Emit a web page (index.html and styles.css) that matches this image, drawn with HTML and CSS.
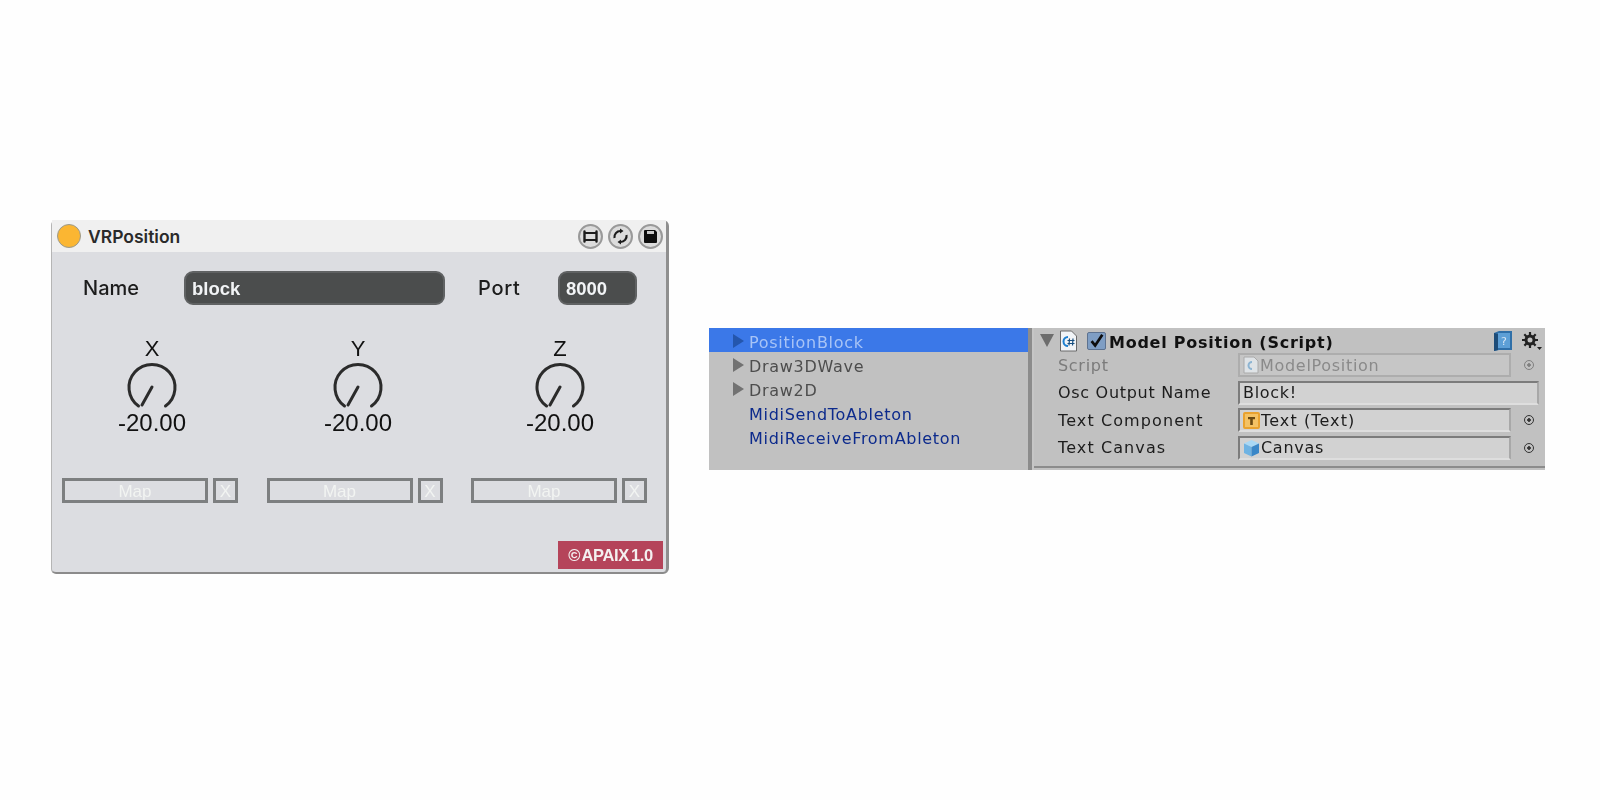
FILE: index.html
```html
<!DOCTYPE html>
<html lang="en">
<head>
  <meta charset="UTF-8">
  <title>VRPosition</title>
  <link rel="stylesheet" href="styles.css">
</head>
<body>
  <div class="page">
    <div class="device">
      <div class="title-bar">
        <span class="dot"></span>
        <span class="device-name">VRPosition</span>
        <div class="title-btns">
          <span class="round-btn">
            <svg width="17" height="17" viewBox="0 0 17 17"><path d="M2.500 3.500v10M14.500 3.500v10" fill="none" stroke="#1c1c1c" stroke-width="2.400" stroke-linecap="round"/><path d="M2.500 5h12M2.500 12h12" fill="none" stroke="#1c1c1c" stroke-width="1.800"/></svg>
          </span>
          <span class="round-btn">
            <svg width="17" height="17" viewBox="0 0 17 17"><path d="M2.500 10a6 6 0 0 1 6-7M14.500 7a6 6 0 0 1-6 7" fill="none" stroke="#1c1c1c" stroke-width="2.200"/><path d="M8 .5l3.500 2.500-3.500 2.500zM9 11.500l-3.500 2.500 3.500 2.500z" fill="#1c1c1c"/></svg>
          </span>
          <span class="round-btn">
            <svg width="17" height="17" viewBox="0 0 17 17"><path d="M2 3a1 1 0 0 1 1-1h10l2 2v10a1 1 0 0 1-1 1H3a1 1 0 0 1-1-1z" fill="#0e0e0e"/><path d="M5 3h7v3H5z" fill="#c9c9c9"/></svg>
          </span>
        </div>
      </div>

      <div class="name-row">
        <span class="name-label">Name</span>
        <span class="field name-field">block</span>
        <span class="port-label">Port</span>
        <span class="field port-field">8000</span>
      </div>

      <div class="knobs">
        <div class="knob">
          <span class="knob-label">X</span>
          <svg class="dial" width="52" height="50" viewBox="0 0 52 50"><path d="M12.500 44a23 23 0 1 1 27 0M16 43l10-18" fill="none" stroke="#2b2b2b" stroke-width="3" stroke-linecap="round"/></svg>
          <span class="knob-value">-20.00</span>
        </div>
        <div class="knob">
          <span class="knob-label">Y</span>
          <svg class="dial" width="52" height="50" viewBox="0 0 52 50"><path d="M12.500 44a23 23 0 1 1 27 0M16 43l10-18" fill="none" stroke="#2b2b2b" stroke-width="3" stroke-linecap="round"/></svg>
          <span class="knob-value">-20.00</span>
        </div>
        <div class="knob">
          <span class="knob-label">Z</span>
          <svg class="dial" width="52" height="50" viewBox="0 0 52 50"><path d="M12.500 44a23 23 0 1 1 27 0M16 43l10-18" fill="none" stroke="#2b2b2b" stroke-width="3" stroke-linecap="round"/></svg>
          <span class="knob-value">-20.00</span>
        </div>
      </div>

      <div class="map-row">
        <div class="map-group"><span class="map-btn">Map</span><span class="map-x">X</span></div>
        <div class="map-group"><span class="map-btn">Map</span><span class="map-x">X</span></div>
        <div class="map-group"><span class="map-btn">Map</span><span class="map-x">X</span></div>
      </div>

      <div class="badge">© APAIX 1.0</div>
    </div>

    <div class="editor">
      <ul class="tree">
        <li class="tree-row selected"><span class="arrow"></span>PositionBlock</li>
        <li class="tree-row"><span class="arrow"></span>Draw3DWave</li>
        <li class="tree-row"><span class="arrow"></span>Draw2D</li>
        <li class="tree-row prefab"><span class="no-arrow"></span>MidiSendToAbleton</li>
        <li class="tree-row prefab"><span class="no-arrow"></span>MidiReceiveFromAbleton</li>
      </ul>

      <div class="splitter"></div>

      <div class="inspector">
        <div class="comp-head">
          <span class="fold"></span>
          <svg class="cs-icon" width="19" height="22" viewBox="0 0 19 22"><path d="M1.500 1h11l5 5v15h-16z" fill="#f1f4f7" stroke="#6a6a6a"/><path d="M9 7a4.500 4.500 0 1 0 0 9" fill="none" stroke="#1d7fd0" stroke-width="2"/><path d="M10.500 8.500l-.5 7M14 8.500l-.5 7M8.500 10.500h7M8.500 13.500h7" stroke="#174f80" stroke-width="1.200"/></svg>
          <span class="check">
            <svg width="19" height="18" viewBox="0 0 19 18"><path d="M4 8l4 5 8-12" fill="none" stroke="#0d0d0d" stroke-width="3"/></svg>
          </span>
          <span class="comp-title">Model Position (Script)</span>
          <svg class="help-icon" width="20" height="22" viewBox="0 0 20 22"><path d="M1 3l5-2h13v19H6l-5 1z" fill="#2f6fa8"/><path d="M5 3h12v15H5z" fill="#5d9fd6"/><path d="M1 3l4 1v16l-4 1z" fill="#1d4c78"/><text x="8" y="15" class="help-mark">?</text></svg>
          <svg class="gear-icon" width="21" height="20" viewBox="0 0 21 20"><g fill="none" stroke="#222"><circle cx="9" cy="9" r="4" stroke-width="3"/><path d="M9 1v16M1 9h16M3.300 3.300l11.400 11.400M14.700 3.300L3.300 14.700" stroke-width="2.200" stroke-dasharray="3 10 3"/></g><path d="M16 16h5l-2.500 3z" fill="#222"/></svg>
        </div>

        <div class="prop disabled">
          <span class="prop-label">Script</span>
          <span class="prop-field"><svg class="small-icon" width="16" height="18" viewBox="0 0 16 18"><path d="M1 1h10l4 4v12H1z" fill="#dfe3e6" stroke="#aaa"/><path d="M9 6a3.500 3.500 0 1 0 0 7" fill="none" stroke="#8db4d2" stroke-width="2"/></svg>ModelPosition</span>
          <span class="target"></span>
        </div>
        <div class="prop">
          <span class="prop-label">Osc Output Name</span>
          <span class="prop-field wide">Block!</span>
        </div>
        <div class="prop">
          <span class="prop-label loose">Text Component</span>
          <span class="prop-field loose"><svg class="small-icon" width="17" height="17" viewBox="0 0 17 17"><rect x="1" y="1" width="15" height="15" rx="1" fill="#f4c264" stroke="#e9a22f" stroke-width="2"/><path d="M5 5h7v2.200H9.800V13H7.200V7.200H5z" fill="#6b4a12"/></svg>Text (Text)</span>
          <span class="target"></span>
        </div>
        <div class="prop">
          <span class="prop-label loose">Text Canvas</span>
          <span class="prop-field"><svg class="small-icon" width="17" height="18" viewBox="0 0 17 18"><path d="M8.500 1l7.500 3.500-7.500 3.500L1 4.500z" fill="#a9d8f5"/><path d="M1 4.500L8.500 8v9.500L1 14z" fill="#6fb3e3"/><path d="M16 4.500L8.500 8v9.500L16 14z" fill="#3a87c8"/></svg>Canvas</span>
          <span class="target"></span>
        </div>
      </div>
    </div>
  </div>
</body>
</html>
```

FILE: styles.css
```css
*{
  margin: 0;
  padding: 0;
  box-sizing: border-box;
}
body{
  background: #fefefe;
  font-family: "Liberation Sans", sans-serif;
}
.page{
  display: flex;
  align-items: flex-start;
  padding: 220px 0 0 51px;
}

/* max device */
.device{
  width: 618px;
  height: 354px;
  background: #dcdde1;
  border-right: 3px solid #8f8f8f;
  border-bottom: 2px solid #8b8b8b;
  border-left: 1px solid #b5b5b5;
  border-radius: 5px 6px 6px 5px;
  display: flex;
  flex-direction: column;
  filter: blur(0.5px);
}
.title-bar{
  height: 32px;
  flex: none;
  display: flex;
  align-items: center;
  padding: 0 3px 0 5px;
  background: #f0f0f0;
}
.dot{
  width: 24px;
  height: 24px;
  border-radius: 50%;
  background: #fbb632;
  border: 1px solid #9a9a8e;
}
.device-name{
  margin-left: 7px;
  font-family: Inter, sans-serif;
  font-size: 17.500px;
  font-weight: 600;
  color: #2a2a2a;
}
.title-btns{
  margin-left: auto;
  display: flex;
  gap: 5px;
}
.round-btn{
  width: 25px;
  height: 25px;
  border-radius: 50%;
  border: 2px solid #999;
  background: #dcdcdc;
  display: flex;
  align-items: center;
  justify-content: center;
}
.name-row{
  margin-top: 19px;
  height: 34px;
  flex: none;
  display: flex;
  align-items: center;
  padding-left: 31px;
  font-family: Inter, sans-serif;
  font-size: 20px;
  font-weight: 500;
  color: #1c1c1c;
}
.name-label{
  width: 101px;
}
.port-label{
  width: 80px;
  margin-left: 33px;
  letter-spacing: 0.7px;
}
.field{
  height: 34px;
  line-height: 31px;
  padding-left: 6px;
  border-radius: 9px;
  background: #4b4d4d;
  border: 2px solid #606263;
  color: #f2f4f6;
  font-family: "Liberation Sans", sans-serif;
  font-size: 18.500px;
  font-weight: bold;
  letter-spacing: 0;
}
.name-field{
  width: 261px;
}
.port-field{
  width: 79px;
}
.knobs{
  display: flex;
  padding-left: 40px;
  margin-top: 31px;
}
.knob{
  width: 120px;
  display: flex;
  flex-direction: column;
  align-items: center;
  color: #111;
}
.knob:nth-child(1){
  margin-right: 86px;
}
.knob:nth-child(2){
  margin-right: 82px;
}
.knob-label{
  font-size: 22px;
  line-height: 25px;
}
.dial{
  display: block;
  margin-top: 1px;
}
.knob-value{
  font-size: 24px;
  line-height: 24px;
  margin-top: -1px;
}
.map-row{
  display: flex;
  gap: 28.500px;
  padding-left: 10px;
  margin-top: 43px;
}
.map-group{
  display: flex;
  gap: 5px;
}
.map-btn,
.map-x{
  height: 25px;
  border: 3px solid #7d7f80;
  color: #f2f4f2;
  font-size: 17px;
  line-height: 21px;
  text-align: center;
}
.map-btn{
  width: 146px;
}
.map-x{
  width: 25px;
}
.badge{
  width: 105px;
  height: 28px;
  margin: 38px 3px 0 auto;
  background: #b5445a;
  color: #f4f0f0;
  font-size: 16.500px;
  font-weight: bold;
  letter-spacing: -0.4px;
  word-spacing: -2px;
  line-height: 29px;
  text-align: center;
}

/* unity editor */
.editor{
  width: 836px;
  height: 142px;
  margin: 108px 0 0 40px;
  display: flex;
  background: #c1c1c1;
  font-family: "DejaVu Sans", sans-serif;
  font-size: 16px;
  letter-spacing: 0.7px;
  filter: blur(0.5px);
}
.tree{
  width: 319px;
  flex: none;
  list-style: none;
}
.tree-row{
  height: 24px;
  line-height: 24px;
  display: flex;
  align-items: center;
  padding: 5px 0 0 24px;
  color: #4d4d4d;
}
.arrow{
  width: 0;
  height: 0;
  margin: -3px 5px 0 0;
  border-left: 11px solid #727272;
  border-top: 7px solid transparent;
  border-bottom: 7px solid transparent;
}
.no-arrow{
  width: 16px;
}
.tree-row.selected{
  background: #3b78e8;
  color: #a8c4f6;
}
.selected .arrow{
  border-left-color: #2456ad;
}
.tree-row.prefab{
  color: #0c2a8c;
}
.splitter{
  width: 6px;
  flex: none;
  background: #c6c6c6;
  border-left: 4px solid #8c8c8c;
}
.inspector{
  flex: 1;
  height: 140px;
  border-bottom: 2px solid #8c8c8c;
}
.comp-head{
  height: 25px;
  display: flex;
  align-items: center;
  padding-left: 6px;
}
.fold{
  width: 0;
  height: 0;
  border-top: 13px solid #6d6d6d;
  border-left: 7px solid transparent;
  border-right: 7px solid transparent;
}
.cs-icon{
  margin-left: 5px;
}
.check{
  width: 19px;
  height: 18px;
  margin-left: 9px;
  background: #7f9ec4;
  border: 1px solid #5d7290;
  border-radius: 2px;
  display: flex;
}
.comp-title{
  margin: 3px 0 0 3px;
  font-weight: bold;
  font-size: 16px;
  letter-spacing: 0.75px;
  color: #111;
}
.help-icon{
  margin-left: auto;
}
.help-mark{
  font-size: 11px;
  fill: #d6e6f4;
  letter-spacing: 0;
}
.gear-icon{
  margin: 0 3px 0 8px;
}
.prop{
  height: 24px;
  margin-bottom: 3.670px;
  display: flex;
  align-items: center;
  padding-left: 24px;
  color: #1c1c1c;
}
.prop-label{
  width: 180px;
  flex: none;
}
.prop-label.loose,
.prop-field.loose{
  letter-spacing: 1.100px;
}
.prop-field{
  width: 273px;
  height: 24px;
  line-height: 21px;
  padding-left: 3px;
  background: #d2d2d2;
  border: 2px solid #7c7c7c;
  border-right-color: #a8a8a8;
  border-bottom-color: #dedede;
  display: flex;
  align-items: center;
  gap: 1px;
}
.prop-field.wide{
  width: 301px;
}
.target{
  width: 10px;
  height: 10px;
  margin-left: 13px;
  border-radius: 50%;
  border: 1.500px solid #333;
  background: radial-gradient(circle, #333 0 1.500px, transparent 2px);
}
.prop.disabled{
  color: #7b7b7b;
}
.disabled .prop-field{
  background: #c6c6c6;
  border-color: #adadad;
  color: #8a8a8a;
}
.disabled .target{
  border-color: #808080;
  background: radial-gradient(circle, #808080 0 1.500px, transparent 2px);
}
```
